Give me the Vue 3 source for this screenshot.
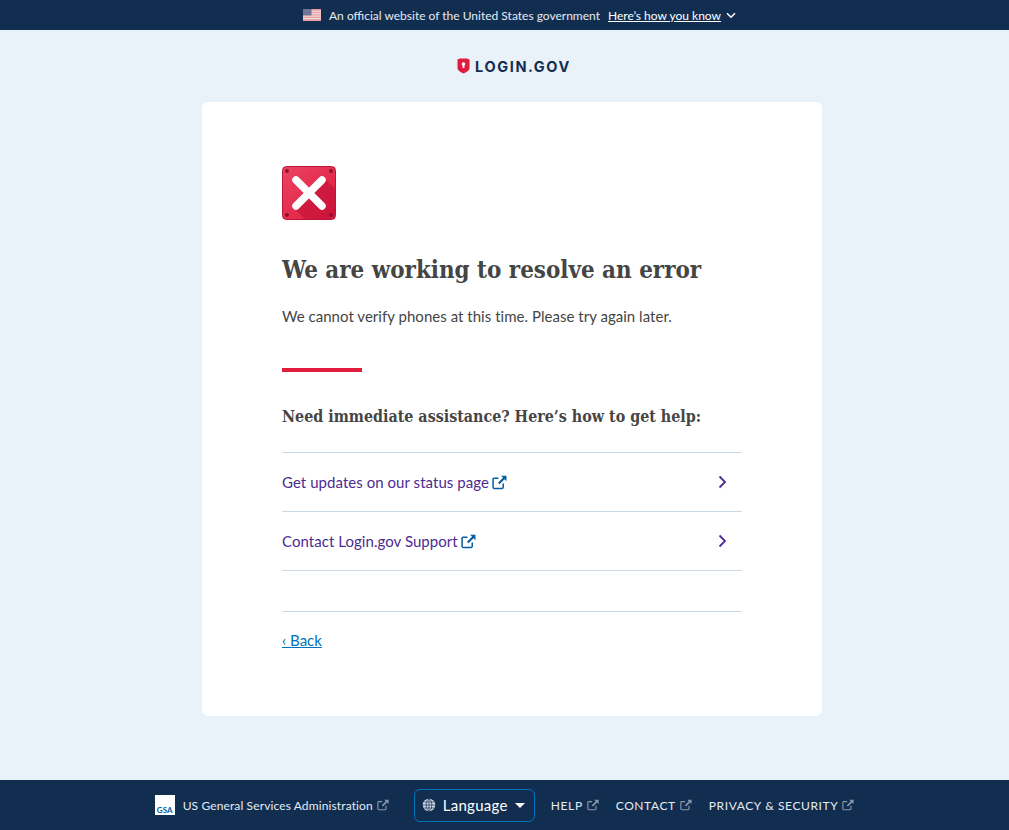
<script setup>
const links = ['Get updates on our status page', 'Contact Login.gov Support']
const foot = ['HELP', 'CONTACT', 'PRIVACY & SECURITY']
</script>

<template>
  <div class="page">
    <header class="banner">
      <svg class="flag" width="18" height="12" viewBox="0 0 18 12">
        <rect width="18" height="12" fill="#e8a0a6" />
        <g fill="#f3e3e4">
          <rect y="1.8" width="18" height="1" />
          <rect y="4.2" width="18" height="1" />
          <rect y="6.6" width="18" height="1" />
          <rect y="9" width="18" height="1" />
        </g>
        <rect width="8.5" height="6.4" fill="#6f7596" />
      </svg>
      <span class="official">An official website of the United States government</span>
      <a class="how">Here’s how you know</a>
      <svg class="chev" width="10" height="7" viewBox="0 0 10 7"><path d="M1 1.2 5 5.2 9 1.2" fill="none" stroke="#fff" stroke-width="1.5" /></svg>
    </header>

    <main class="main">
      <div class="logo">
        <svg width="13" height="16" viewBox="0 0 13 16">
          <path d="M.5 1.500 3 .5h7l2.500 1v8.500c0 2.500-3.500 4.500-6 5.500-2.500-1-6-3-6-5.500z" fill="#e21c3d" />
          <circle cx="6.500" cy="6" r="1.800" fill="#fff" />
          <rect x="5.600" y="6" width="1.800" height="4" fill="#fff" />
        </svg>
        <span class="word">LOGIN.GOV</span>
      </div>

      <section class="card">
        <svg class="err" width="54" height="54" viewBox="0 0 54 54">
          <defs>
            <linearGradient id="g" x1="0" y1="0" x2="1" y2="1">
              <stop offset="0" stop-color="#ec4463" />
              <stop offset="1" stop-color="#de1a3e" />
            </linearGradient>
          </defs>
          <rect x=".5" y=".5" width="53" height="53" rx="4" fill="url(#g)" stroke="#b8183a" />
          <path d="M41 11 53 23V49a4 4 0 0 1-4 4H23L12 42z" fill="#c8143a" opacity=".75" />
          <g fill="#8f1030">
            <circle cx="5" cy="5" r="2" /><circle cx="49" cy="5" r="2" />
            <circle cx="5" cy="49" r="2" /><circle cx="49" cy="49" r="2" />
          </g>
          <path d="M14 14 40 40M40 14 14 40" stroke="#fff" stroke-width="7.500" stroke-linecap="round" />
        </svg>

        <h1 class="title">We are working to resolve an error</h1>
        <p class="text">We cannot verify phones at this time. Please try again later.</p>
        <div class="bar"></div>
        <h2 class="sub">Need immediate assistance? Here’s how to get help:</h2>

        <ul class="list">
          <li v-for="l in links" :key="l" class="row">
            <span class="row-label">{{ l }}
              <svg class="ext" width="15" height="15" viewBox="0 0 14 14">
                <path d="M10.500 8v3.500a1 1 0 0 1-1 1H2a1 1 0 0 1-1-1V4a1 1 0 0 1 1-1h4" fill="none" stroke="#005ea2" stroke-width="1.400" />
                <path d="M8.500 .8H13.500V5.800L11.700 4 7 8.700 5.600 7.300 10.300 2.600z" fill="#005ea2" />
              </svg>
            </span>
            <svg width="9" height="14" viewBox="0 0 9 14"><path d="M1.500 1.500 7 7 1.500 12.500" fill="none" stroke="#4c2c92" stroke-width="1.800" /></svg>
          </li>
        </ul>

        <div class="back-wrap"><a class="back">‹ Back</a></div>
      </section>
    </main>

    <footer class="footer">
      <div class="gsa"><span>GSA</span></div>
      <span class="agency">US General Services Administration
        <svg class="fext" width="12" height="12" viewBox="0 0 14 14">
          <path d="M10.500 8v3.500a1 1 0 0 1-1 1H2a1 1 0 0 1-1-1V4a1 1 0 0 1 1-1h4" fill="none" stroke="#8b98a9" stroke-width="1.300" />
          <path d="M8.500 .8H13.500V5.800L11.700 4 7 8.700 5.600 7.300 10.300 2.600z" fill="#8b98a9" />
        </svg>
      </span>
      <div class="lang">
        <svg width="14" height="14" viewBox="0 0 14 14" fill="none" stroke="#112e51" stroke-width=".7">
          <circle cx="7" cy="7" r="6.200" fill="#d5dbe3" stroke="none" />
          <ellipse cx="7" cy="7" rx="2.800" ry="6" />
          <path d="M1 7H13M2 4H12M2 10H12M7 1V13" />
        </svg>
        <span class="lang-text">Language</span>
        <svg width="10" height="5" viewBox="0 0 10 5"><path d="M0 0H10L5 5z" fill="#fff" /></svg>
      </div>
      <nav class="fnav">
        <span v-for="f in foot" :key="f" class="fitem">{{ f }}
          <svg class="fext" width="12" height="12" viewBox="0 0 14 14">
            <path d="M10.500 8v3.500a1 1 0 0 1-1 1H2a1 1 0 0 1-1-1V4a1 1 0 0 1 1-1h4" fill="none" stroke="#8b98a9" stroke-width="1.300" />
            <path d="M8.500 .8H13.500V5.800L11.700 4 7 8.700 5.600 7.300 10.300 2.600z" fill="#8b98a9" />
          </svg>
        </span>
      </nav>
    </footer>
  </div>
</template>

<style scoped>
.page {
  min-height: 830px;
  display: flex;
  flex-direction: column;
  background: #e9f1f9;
  font-family: Lato, "Noto Sans", sans-serif;
  color: #454545;
}
.banner {
  height: 30px;
  padding-left: 30px;
  background: #112e51;
  display: flex;
  align-items: center;
  justify-content: center;
  color: #e6ebf1;
  font-size: 12px;
}
.flag { margin-right: 8px; }
.official { margin-right: 8px; }
.how { color: #fff; text-decoration: underline; margin-right: 5px; }
.main {
  flex: 1;
  display: flex;
  flex-direction: column;
  align-items: center;
  padding-left: 15px;
}
.logo {
  height: 72px;
  padding-left: 4px;
  display: flex;
  align-items: center;
  justify-content: center;
  gap: 5px;
}
.word {
  font-family: Inter, sans-serif;
  font-weight: 700;
  font-size: 14.500px;
  letter-spacing: 1.600px;
  color: #112e51;
}
.card {
  width: 620px;
  height: 614px;
  box-sizing: border-box;
  padding: 64px 80px 0;
  background: #fff;
  border-radius: 6px;
}
.err { display: block; }
.title {
  margin: 33px 0 0;
  font-family: "DejaVu Serif", serif;
  font-stretch: condensed;
  font-size: 23.900px;
  line-height: 34px;
  font-weight: 700;
  color: #454545;
}
.text {
  margin: 17px 0 0;
  font-size: 15px;
  line-height: 24px;
  letter-spacing: .03px;
}
.bar {
  width: 80px;
  height: 4px;
  margin-top: 40px;
  background: #e21c3d;
}
.sub {
  margin: 33px 0 0;
  font-family: "DejaVu Serif", serif;
  font-stretch: condensed;
  font-size: 15.900px;
  line-height: 24px;
  font-weight: 700;
  color: #454545;
}
.list {
  list-style: none;
  margin: 23px 0 0;
  padding: 0;
  border-top: 1px solid #ccd9ea;
}
.row {
  height: 58px;
  border-bottom: 1px solid #ccd9ea;
  display: flex;
  align-items: center;
  justify-content: space-between;
  padding-right: 15px;
  color: #4c2c92;
  font-size: 15px;
  letter-spacing: .05px;
}
.row-label { display: flex; align-items: center; gap: 3px; }
.back-wrap {
  margin-top: 40px;
  border-top: 1px solid #ccd9ea;
  padding-top: 16px;
  line-height: 24px;
  font-size: 15px;
}
.back { color: #0071bc; text-decoration: underline; }
.footer {
  height: 50px;
  background: #112e51;
  display: flex;
  align-items: center;
  justify-content: center;
  color: #e6ebf1;
  font-size: 12px;
}
.gsa {
  width: 20px;
  height: 20px;
  background: #fff;
  margin-right: 8px;
  display: flex;
  align-items: flex-end;
  justify-content: center;
  overflow: hidden;
}
.gsa span {
  font-size: 8px;
  font-weight: 700;
  color: #005ea2;
  line-height: 10px;
}
.agency { display: flex; align-items: center; gap: 4px; margin-right: 25px; letter-spacing: .12px; }
.lang {
  width: 121px;
  height: 33px;
  box-sizing: border-box;
  border: 1px solid #0071bc;
  border-radius: 6px;
  display: flex;
  align-items: center;
  padding-left: 7px;
  gap: 7px;
  color: #fff;
  font-size: 15px;
  margin-right: 16px;
}
.lang-text { letter-spacing: .25px; }
.fnav { display: flex; gap: 17px; }
.fitem { display: flex; align-items: center; gap: 4px; letter-spacing: .6px; }
</style>
